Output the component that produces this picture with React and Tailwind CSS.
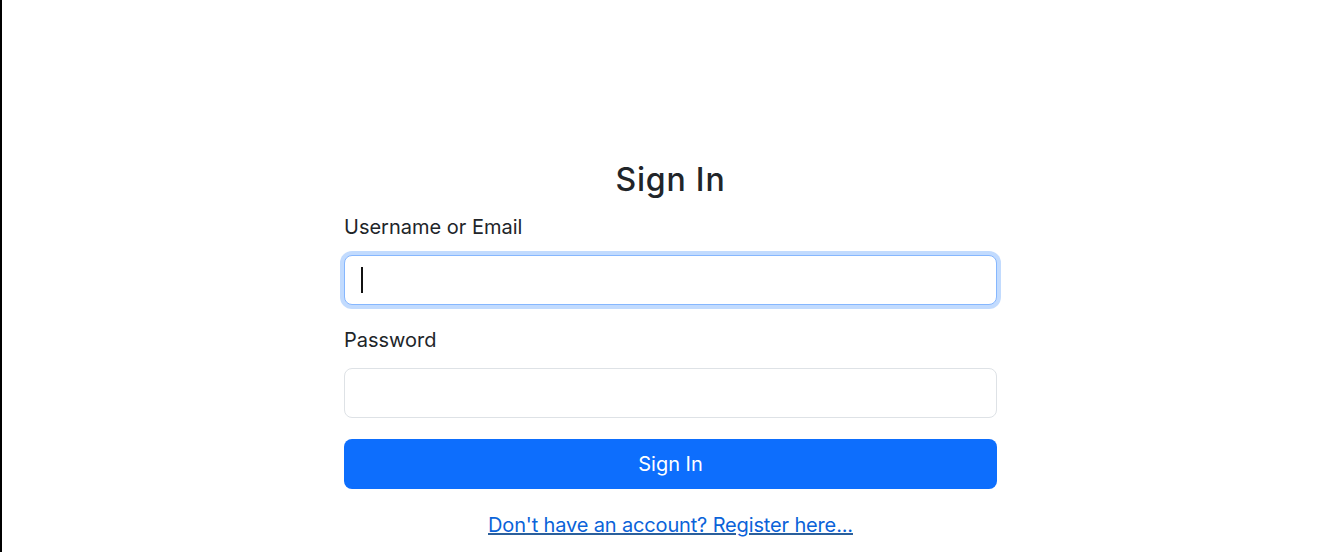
import React from 'react';

const App = () => {
    return (
        <div className="min-h-screen border-l-2 border-black bg-white text-[#212529] font-['Inter','Roboto',sans-serif]">
            <div className="flex justify-center pl-[7px] pt-[161px]">
                <form className="w-[653px] flex flex-col" onSubmit={(e) => e.preventDefault()}>
                    <h2 className="text-center text-[32px] leading-[38px] font-medium tracking-[0.8px]">Sign In</h2>

                    <label htmlFor="username" className="mt-[13px] mb-[13px] text-[20px] leading-[30px]">
                        Username or Email
                    </label>
                    <div className="relative">
                        <input
                            id="username"
                            type="text"
                            autoFocus
                            className="h-[50px] w-full rounded-lg border border-[#86b7fe] bg-white px-4 text-[20px] text-[#212529] caret-black outline-none ring-4 ring-[#0d6efd]/25"
                        />
                        {/* caret as it shows in the focused field */}
                        <span className="pointer-events-none absolute left-[17px] top-[12px] h-[26px] w-[2px] bg-[#111]"></span>
                    </div>

                    <label htmlFor="password" className="mt-5 mb-[13px] text-[20px] leading-[30px]">
                        Password
                    </label>
                    <input
                        id="password"
                        type="password"
                        className="h-[50px] w-full rounded-lg border border-[#dee2e6] bg-white px-4 text-[20px] outline-none"
                    />

                    <button
                        type="submit"
                        className="mt-[21px] h-[50px] w-full rounded-lg bg-[#0d6efd] text-[20px] leading-[30px] text-white"
                    >
                        Sign In
                    </button>

                    <div className="mt-[21px] text-center text-[20px] leading-[30px]">
                        <a href="#" className="text-[#0b63d9] underline decoration-[#2a5f9c] tracking-[-0.15px]">
                            Don't have an account? Register here...
                        </a>
                    </div>
                </form>
            </div>
        </div>
    );
};

export default App;
